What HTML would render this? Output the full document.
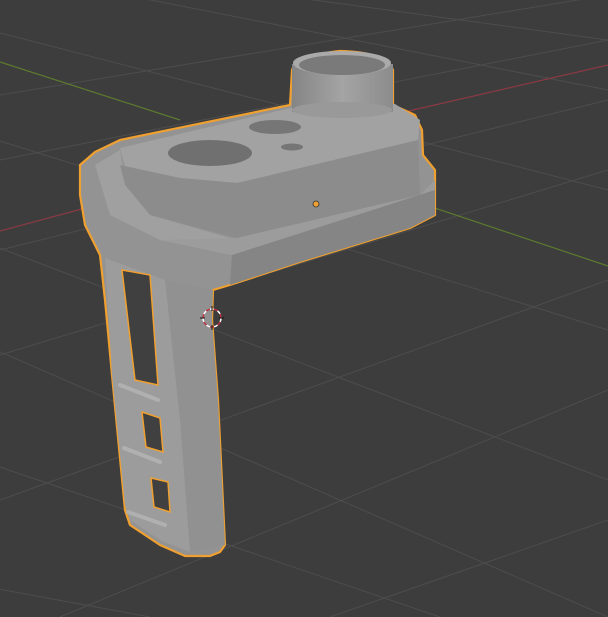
<!DOCTYPE html>
<html><head><style>html,body{margin:0;padding:0;background:#3d3d3d;overflow:hidden}svg{display:block}</style></head>
<body>
<svg width="608" height="617" viewBox="0 0 608 617" xmlns="http://www.w3.org/2000/svg">
<rect width="608" height="617" fill="#3d3d3d"/>
<g stroke="#4d4d4d" stroke-width="1" fill="none">
<path d="M0 95 L608 -5 M0 160 L608 40 M0 250 L608 100 M0 355 L608 170 M0 500 L608 280 M60 617 L608 390 M330 617 L608 520"/>
<path d="M-50 20 L608 190 M-100 110 L608 330 M-100 210 L608 480 M-50 330 L608 617 M-50 450 L440 617 M-50 580 L150 617 M100 -10 L608 90 M240 -10 L608 40"/>
</g>
<line x1="0" y1="231" x2="130" y2="196" stroke="#8a3a44" stroke-width="1.2"/>
<line x1="400" y1="113" x2="608" y2="65" stroke="#8a3a44" stroke-width="1.2"/>
<line x1="0" y1="62" x2="180" y2="120" stroke="#5d7a2e" stroke-width="1.2"/>
<line x1="345" y1="178" x2="608" y2="266" stroke="#5d7a2e" stroke-width="1.2"/>
<defs>
<linearGradient id="cyl" x1="0" x2="1"><stop offset="0" stop-color="#858585"/><stop offset="0.5" stop-color="#a4a4a4"/><stop offset="1" stop-color="#8c8c8c"/></linearGradient>
</defs>
<path d="M80 165 L95 152 L120 140 L290 105 L292 70 Q296 56 340 51 Q386 52 393 70 L393 105 L415 115 L422 130 L423 155 L435 170 L435 215 L410 228 L300 262 L230 285 L213 290 L212 320 L218 400 L225 545 L220 552 L210 556 L185 556 L160 545 L130 525 L125 510 L112 375 L105 300 L100 255 L85 225 L80 195 Z" fill="#939393" stroke="#f0a030" stroke-width="2.2" stroke-linejoin="round"/>
<path d="M95 165 L120 150 L125 180 L150 215 L237 240 L237 256 L160 240 L110 215 Z" fill="#a0a0a0"/>
<path d="M120 148 L290 108 L395 104 L420 120 L418 140 L360 160 L237 183 L180 178 L125 167 Z" fill="#a2a2a2"/>
<path d="M120 165 L180 178 L237 183 L418 140 L420 195 L237 238 L150 215 L125 185 Z" fill="#8c8c8c"/>
<path d="M237 238 L420 195 L435 180 L435 190 L237 255 L160 240 Z" fill="#9c9c9c"/>
<path d="M232 255 L435 190 L435 215 L410 228 L300 262 L230 285 Z" fill="#858585"/>
<rect x="292" y="64" width="101" height="48" fill="url(#cyl)"/>
<ellipse cx="342" cy="110" rx="50" ry="8" fill="#999"/>
<ellipse cx="342" cy="63" rx="49" ry="12" fill="#aaa"/>
<ellipse cx="342" cy="65" rx="43" ry="10" fill="#7a7a7a"/>
<ellipse cx="210" cy="153" rx="42" ry="13" fill="#707070"/>
<ellipse cx="275" cy="127" rx="26" ry="7" fill="#767676"/>
<ellipse cx="292" cy="147" rx="11" ry="3.5" fill="#767676"/>
<path d="M165 280 L213 290 L212 320 L218 400 L225 545 L190 552 L180 420 Z" fill="#919191"/>
<path d="M105 258 L165 280 L180 420 L190 552 L160 540 L130 520 L125 505 L112 375 Z" fill="#9c9c9c"/>
<g fill="#404040" stroke="#f0a030" stroke-width="1.5">
<path d="M122 270 L150 275 L158 385 L135 380 Z"/>
<path d="M142 412 L160 418 L163 452 L146 447 Z"/>
<path d="M151 478 L168 482 L170 512 L154 507 Z"/>
</g>
<g stroke="#b0b0b0" stroke-width="4" fill="none" stroke-linecap="round">
<path d="M120 385 L158 400"/><path d="M124 448 L160 462"/><path d="M128 512 L165 525"/>
</g>
<circle cx="316" cy="204" r="3" fill="#f0a030" stroke="#333" stroke-width="0.8"/>
<circle cx="212" cy="318" r="9" fill="none" stroke="#fff" stroke-width="1.5" stroke-dasharray="4 4"/>
<circle cx="212" cy="318" r="9" fill="none" stroke="#c03040" stroke-width="1.5" stroke-dasharray="4 4" stroke-dashoffset="4"/>
<path d="M200 318 L205 318 M219 318 L224 318 M212 306 L212 311 M212 325 L212 330" stroke="#111" stroke-width="1"/>
</svg>
</body></html>
